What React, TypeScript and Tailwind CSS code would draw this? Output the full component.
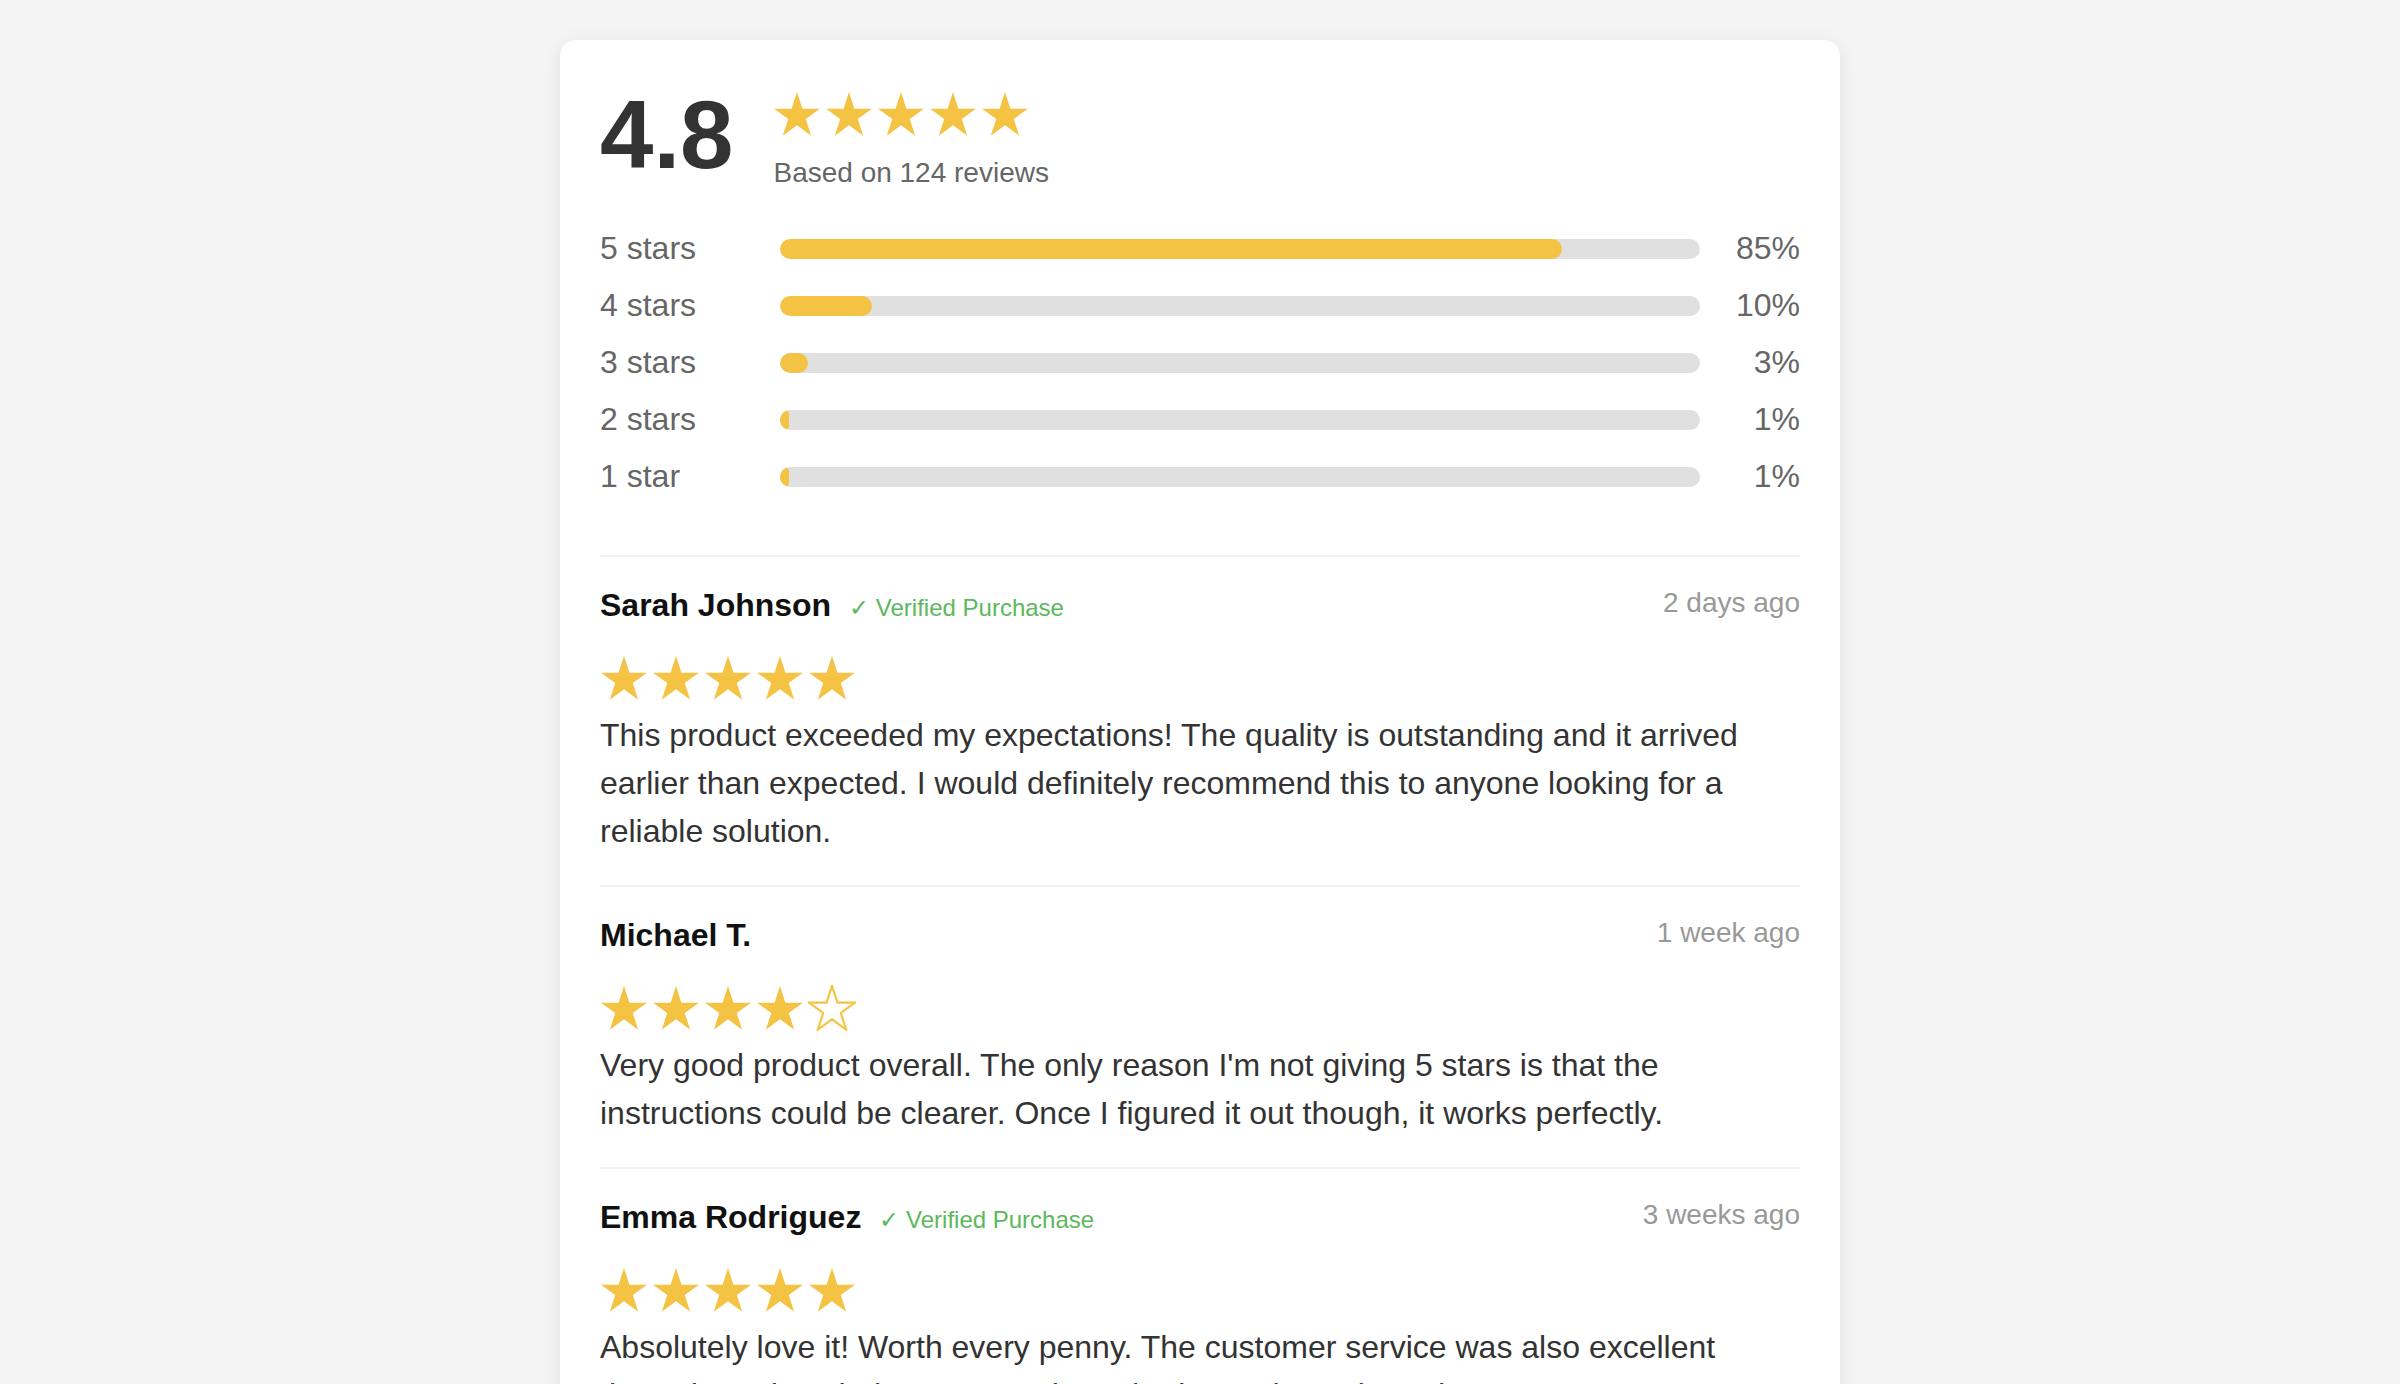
import React from "react";

const STAR_POINTS =
  "24,0 29.66,17.41 47.97,17.41 33.16,28.18 38.81,45.59 24,34.83 9.19,45.59 14.84,28.18 0.03,17.41 18.34,17.41";

function Star({ filled = true }: { filled?: boolean }) {
  return (
    <svg viewBox="-1 -1 50 48" className="w-[48px] h-[46px] shrink-0">
      {filled ? (
        <polygon points={STAR_POINTS} fill="#f5c344" />
      ) : (
        <polygon points={STAR_POINTS} fill="none" stroke="#f5c344" strokeWidth="2.2" strokeLinejoin="miter" />
      )}
    </svg>
  );
}

function Stars({ count }: { count: number }) {
  return (
    <div className="flex gap-[4px]">
      {[0, 1, 2, 3, 4].map((i) => (
        <Star key={i} filled={i < count} />
      ))}
    </div>
  );
}

const breakdown = [
  { label: "5 stars", pct: 85 },
  { label: "4 stars", pct: 10 },
  { label: "3 stars", pct: 3 },
  { label: "2 stars", pct: 1 },
  { label: "1 star", pct: 1 },
];

const reviews = [
  {
    name: "Sarah Johnson",
    verified: true,
    date: "2 days ago",
    rating: 5,
    text: "This product exceeded my expectations! The quality is outstanding and it arrived earlier than expected. I would definitely recommend this to anyone looking for a reliable solution.",
  },
  {
    name: "Michael T.",
    verified: false,
    date: "1 week ago",
    rating: 4,
    text: "Very good product overall. The only reason I'm not giving 5 stars is that the instructions could be clearer. Once I figured it out though, it works perfectly.",
  },
  {
    name: "Emma Rodriguez",
    verified: true,
    date: "3 weeks ago",
    rating: 5,
    text: "Absolutely love it! Worth every penny. The customer service was also excellent throughout the whole process when I had questions about the setup.",
  },
];

export default function App() {
  return (
    <main className="min-h-screen bg-[#f4f4f4] pt-[40px] pb-[40px] font-['Liberation_Sans',Arial,sans-serif]">
      <div className="mx-auto w-[1280px] bg-white rounded-[16px] shadow-[0_4px_20px_rgba(0,0,0,0.08)] p-[40px]">
        {/* Summary */}
        <div className="flex items-start gap-[40px] mb-[40px]">
          <div className="text-[96px] leading-[110px] font-bold text-[#333]">4.8</div>
          <div className="pt-[11px]">
            <Stars count={5} />
            <p className="mt-[20px] text-[28px] leading-[32px] text-[#666]">Based on 124 reviews</p>
          </div>
        </div>

        {/* Breakdown */}
        <div className="flex flex-col gap-[20px] mb-[60px]">
          {breakdown.map((row) => (
            <div key={row.label} className="flex items-center h-[37px]">
              <span className="w-[180px] shrink-0 text-[32px] leading-[37px] text-[#666]">{row.label}</span>
              <div className="flex-1 h-[20px] rounded-full bg-[#e0e0e0] overflow-hidden">
                <div className="h-full rounded-full bg-[#f5c344]" style={{ width: `${row.pct}%` }} />
              </div>
              <span className="w-[100px] shrink-0 text-right text-[32px] leading-[37px] text-[#666]">{row.pct}%</span>
            </div>
          ))}
        </div>

        {/* Reviews */}
        {reviews.map((r) => (
          <div key={r.name} className="border-t-2 border-[#f0f0f0] py-[30px]">
            <div className="flex items-start justify-between">
              <div className="leading-[normal]">
                <span className="text-[32px] font-bold text-[#111]">{r.name}</span>
                {r.verified && (
                  <span className="ml-[18px] text-[24px] text-[#5cb85c]">✓ Verified Purchase</span>
                )}
              </div>
              <span className="text-[28px] leading-[normal] text-[#999]">{r.date}</span>
            </div>
            <div className="mt-[31px]">
              <Stars count={r.rating} />
            </div>
            <p className="mt-[10px] text-[32px] leading-[48px] text-[#333]">{r.text}</p>
          </div>
        ))}
      </div>
    </main>
  );
}
